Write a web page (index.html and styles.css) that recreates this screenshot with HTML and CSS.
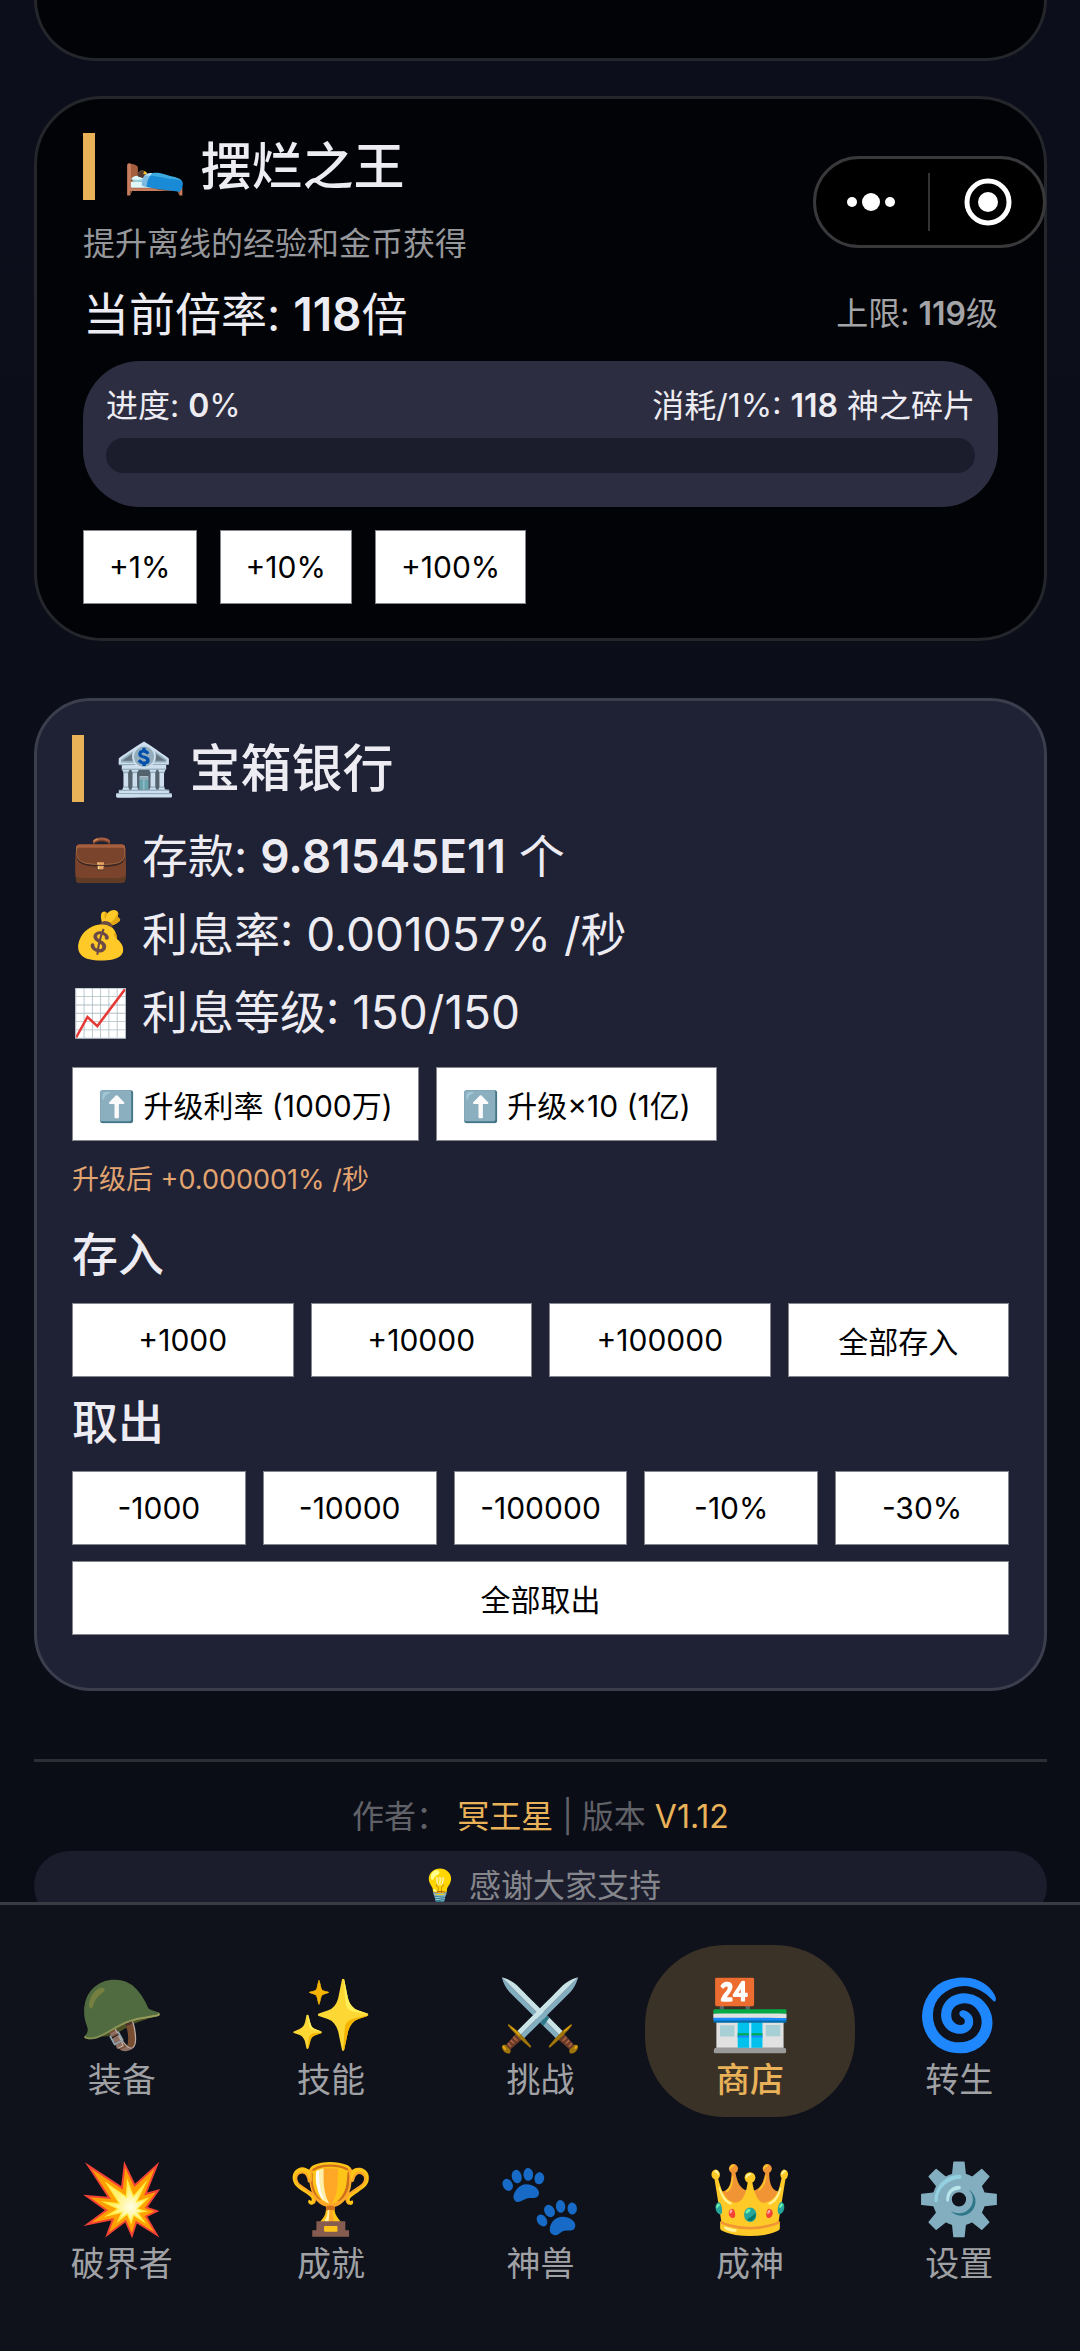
FILE: index.html
```
<!DOCTYPE html>
<html lang="zh-CN">
<head>
    <meta charset="UTF-8">
    <meta name="viewport" content="width=device-width, initial-scale=1.0">
    <title>商店</title>
    <link rel="stylesheet" href="styles.css">
</head>
<body>
    <main class="page">
        <section class="card card-prev"></section>

        <section class="card card-lazy">
            <h2 class="title"><span class="emoji">🛌</span> 摆烂之王</h2>
            <p class="desc">提升离线的经验和金币获得</p>
            <div class="rate-row">
                <span class="rate">当前倍率: <b>118</b>倍</span>
                <span class="limit">上限: <b>119</b>级</span>
            </div>
            <div class="progress-box">
                <div class="progress-text">
                    <span>进度: <b>0</b>%</span>
                    <span>消耗/1%: <b>118</b> 神之碎片</span>
                </div>
                <div class="progress-bar"></div>
            </div>
            <div class="step-row">
                <button type="button">+1%</button>
                <button type="button">+10%</button>
                <button type="button">+100%</button>
            </div>
        </section>

        <section class="card card-bank">
            <h2 class="title"><span class="emoji">🏦</span> 宝箱银行</h2>
            <p class="line"><span class="emoji">💼</span> 存款: <b>9.81545E11</b> 个</p>
            <p class="line"><span class="emoji">💰</span> 利息率: 0.001057% /秒</p>
            <p class="line"><span class="emoji">📈</span> 利息等级: 150/150</p>
            <div class="btn-row">
                <button type="button"><span class="emoji">⬆️</span> 升级利率 (1000万)</button>
                <button type="button"><span class="emoji">⬆️</span> 升级×10 (1亿)</button>
            </div>
            <p class="hint">升级后 +0.000001% /秒</p>
            <h3 class="subtitle">存入</h3>
            <div class="btn-row fill">
                <button type="button">+1000</button>
                <button type="button">+10000</button>
                <button type="button">+100000</button>
                <button type="button">全部存入</button>
            </div>
            <h3 class="subtitle">取出</h3>
            <div class="btn-row fill">
                <button type="button">-1000</button>
                <button type="button">-10000</button>
                <button type="button">-100000</button>
                <button type="button">-10%</button>
                <button type="button">-30%</button>
            </div>
            <div class="btn-row fill">
                <button type="button">全部取出</button>
            </div>
        </section>

        <footer class="footer">
            <p class="author">作者： <em>冥王星</em> | 版本 <em>V1.12</em></p>
            <p class="thanks"><span class="emoji">💡</span> 感谢大家支持</p>
        </footer>
    </main>

    <div class="capsule">
        <button type="button" aria-label="更多">
            <svg width="50" height="50" viewBox="0 0 50 50"><circle cx="6" cy="25" r="5"/><circle cx="25" cy="25" r="9"/><circle cx="44" cy="25" r="5"/></svg>
        </button>
        <button type="button" aria-label="关闭">
            <svg width="50" height="50" viewBox="0 0 50 50"><circle class="ring" cx="25" cy="25" r="21"/><circle cx="25" cy="25" r="10"/></svg>
        </button>
    </div>

    <nav class="tabbar">
        <a href="#equip"><span class="emoji">🪖</span>装备</a>
        <a href="#skill"><span class="emoji">✨</span>技能</a>
        <a href="#fight"><span class="emoji">⚔️</span>挑战</a>
        <a href="#shop" class="active"><span class="emoji">🏪</span>商店</a>
        <a href="#rebirth"><span class="emoji">🌀</span>转生</a>
        <a href="#breaker"><span class="emoji">💥</span>破界者</a>
        <a href="#achieve"><span class="emoji">🏆</span>成就</a>
        <a href="#beast"><span class="emoji">🐾</span>神兽</a>
        <a href="#god"><span class="emoji">👑</span>成神</a>
        <a href="#setting"><span class="emoji">⚙️</span>设置</a>
    </nav>
</body>
</html>
```
FILE: styles.css
```
* {
    box-sizing: border-box;
}

body {
    margin: 0;
    min-height: 100vh;
    font-family: Inter, "Noto Sans CJK SC", sans-serif;
    color: #ececf2;
    background: linear-gradient(#0c0f1b, #0a0c15);
}

h2, h3, p {
    margin: 0;
}

b {
    font-weight: 600;
}

.page {
    padding: 0 33px 0 34px;
}

.card {
    border: 3px solid #25262b;
    border-radius: 68px;
    background: #020306;
}

.card-prev {
    height: 61px;
    border-top: none;
    border-radius: 0 0 68px 68px;
}

.card-lazy {
    margin-top: 35px;
    padding: 34px 46px;
}

.card-bank {
    margin-top: 57px;
    padding: 34px 35px 53px;
    border-color: #3c3e4e;
    border-radius: 57px;
    background: #1f2135;
}

.title {
    padding-left: 28px;
    border-left: 12px solid #e9b259;
    font-size: 51px;
    line-height: 67px;
    font-weight: 500;
}

.desc {
    margin-top: 21px;
    font-size: 32px;
    line-height: 46px;
    color: #96979b;
}

.rate-row {
    display: flex;
    justify-content: space-between;
    align-items: center;
    margin-top: 14px;
    line-height: 66px;
}

.rate {
    font-size: 46px;
}

.limit {
    font-size: 32px;
    color: #a3a4a8;
}

.progress-box {
    margin-top: 14px;
    padding: 22px 23px 34px;
    border-radius: 57px;
    background: #2c2d40;
}

.progress-text {
    display: flex;
    justify-content: space-between;
    font-size: 32px;
    line-height: 46px;
}

.progress-bar {
    height: 35px;
    margin-top: 9px;
    border-radius: 18px;
    background: #1b1d2d;
}

button {
    height: 74px;
    padding: 0 25px;
    border: 1px solid #84858d;
    border-radius: 0;
    background: #fff;
    color: #000;
    font-family: inherit;
    font-size: 30px;
    white-space: nowrap;
}

.step-row {
    display: flex;
    gap: 23px;
    margin-top: 23px;
}

.line {
    font-size: 46px;
    line-height: 78px;
}

.title + .line {
    margin-top: 15px;
}

.btn-row {
    display: flex;
    gap: 17px;
    margin-top: 16px;
}

.fill button {
    flex: 1 1 0;
    padding: 0;
}

.hint {
    margin-top: 18px;
    font-size: 27px;
    line-height: 42px;
    color: #e2a470;
}

.subtitle {
    margin-top: 12px;
    font-size: 46px;
    line-height: 66px;
    font-weight: 500;
}

.hint + .subtitle {
    margin-top: 20px;
}

.footer {
    margin-top: 68px;
    padding-top: 32px;
    border-top: 3px solid #2e2f36;
    font-size: 32px;
    line-height: 46px;
    text-align: center;
    color: #616268;
}

.footer em {
    font-style: normal;
    color: #e9b259;
}

.thanks {
    margin-top: 11px;
    padding: 12px 23px;
    border-radius: 35px;
    background: #1b1d2d;
    color: #85868c;
}

/* floating capsule over the page */
.capsule {
    position: fixed;
    top: 156px;
    right: 34px;
    display: flex;
    gap: 7px;
    width: 233px;
    height: 92px;
    border: 3px solid #39393b;
    border-radius: 46px;
    background: #000;
}

.capsule button {
    flex: 1;
    display: flex;
    align-items: center;
    justify-content: center;
    height: auto;
    padding: 0;
    border: none;
    background: none;
}

.capsule button + button::before {
    content: "";
    position: absolute;
    left: 112px;
    width: 2px;
    height: 58px;
    background: #333335;
}

.capsule svg {
    fill: #fff;
}

.capsule .ring {
    fill: none;
    stroke: #fff;
    stroke-width: 5;
}

.tabbar {
    position: fixed;
    left: 0;
    right: 0;
    bottom: 0;
    display: grid;
    grid-template-columns: repeat(5, 1fr);
    row-gap: 12px;
    padding: 40px 16px 50px 17px;
    border-top: 3px solid #3a3b45;
    background: #0f121b;
}

.tabbar a {
    display: flex;
    flex-direction: column;
    align-items: center;
    gap: 3px;
    height: 172px;
    padding-top: 31px;
    border-radius: 80px;
    font-size: 34px;
    line-height: 48px;
    color: #a0a1a5;
    text-decoration: none;
}

.tabbar .emoji {
    height: 77px;
    font-size: 69px;
    line-height: 77px;
}

.tabbar .active {
    background: #3a3127;
    color: #e9b259;
    font-weight: 500;
}
```
